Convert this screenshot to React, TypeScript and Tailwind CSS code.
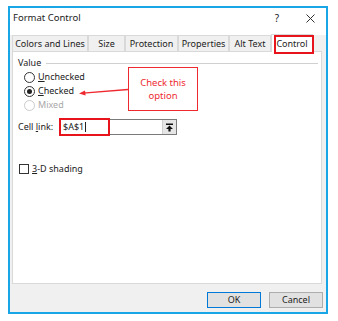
import React from "react";

const tabs = [
  { label: "Colors and Lines", w: "w-[76px]" },
  { label: "Size", w: "w-[37px]" },
  { label: "Protection", w: "w-[53px]" },
  { label: "Properties", w: "w-[51px]" },
  { label: "Alt Text", w: "w-[42px]" },
];

function Radio({ checked, disabled }: { checked?: boolean; disabled?: boolean }) {
  return (
    <span
      className={
        "flex h-[11px] w-[11px] items-center justify-center rounded-full border bg-white " +
        (disabled ? "border-[#cccccc]" : "border-[#333333]")
      }
    >
      {checked && <span className="h-[5px] w-[5px] rounded-full bg-[#222222]" />}
    </span>
  );
}

function UploadIcon() {
  return (
    <svg width="9" height="9" viewBox="0 0 9 9">
      <rect x="1" y="0.5" width="7" height="1.5" fill="#111" />
      <path d="M4.5 2.5 L8 6 L5.6 6 L5.6 8.5 L3.4 8.5 L3.4 6 L1 6 Z" fill="#111" />
    </svg>
  );
}

export default function App() {
  return (
    <div
      className="h-[321px] w-[338px] bg-white pl-[8px] pt-[6px] text-[9px] text-[#222222]"
      style={{ fontFamily: '"Noto Sans", "Open Sans", Arial, sans-serif' }}
    >
      <div className="flex h-[308px] w-[320px] flex-col border-2 border-[#19a6e6] bg-[#f0f0f0]">
        {/* title bar */}
        <div className="flex h-[27px] items-start bg-white pl-[3px] pr-[11px] pt-[4px]">
          <span className="text-[9.5px] leading-[12px]">Format Control</span>
          <span className="ml-auto mr-[27px] text-[10px] leading-[12px]">?</span>
          <svg width="9" height="9" viewBox="0 0 9 9" className="mt-[2px]">
            <path d="M0.5 0.5 L8.5 8.5 M8.5 0.5 L0.5 8.5" stroke="#333" strokeWidth="1" />
          </svg>
        </div>

        {/* tabs */}
        <div className="relative ml-[2px] flex h-[16px] items-end">
          {tabs.map((t) => (
            <div
              key={t.label}
              className={
                "flex h-[16px] items-center justify-center border-l border-t border-r border-[#d9d9d9] bg-[#f0f0f0] " +
                t.w
              }
            >
              {t.label}
            </div>
          ))}
          <div className="relative z-10 -mb-px flex h-[18px] w-[42px] items-center justify-center border-l border-t border-r border-[#d9d9d9] bg-white">
            Control
          </div>
          <div className="absolute left-[262px] top-[0px] z-20 h-[19px] w-[40px] border-2 border-[#e8141c]" />
        </div>

        {/* panel */}
        <div className="relative ml-[2px] mr-[4px] h-[233px] border border-[#d9d9d9] bg-white">
          <div className="flex items-center pl-[5px] pt-[5px]">
            <span className="leading-[12px]">Value</span>
            <span className="ml-[5px] mr-[3px] h-px flex-1 bg-[#d0d0d0]" />
          </div>
          <div className="flex flex-col gap-[2px] pl-[11px] pt-[2px]">
            <div className="flex h-[12px] items-center gap-[3px]">
              <Radio />
              <span>
                <u>U</u>nchecked
              </span>
            </div>
            <div className="flex h-[12px] items-center gap-[3px]">
              <Radio checked />
              <span>
                <u>C</u>hecked
              </span>
            </div>
            <div className="flex h-[12px] items-center gap-[3px] text-[#a8a8a8]">
              <Radio disabled />
              <span>Mixed</span>
            </div>
          </div>

          <div className="flex items-center pl-[5px] pt-[8px]">
            <span className="w-[41px]">
              Cell <u>l</u>ink:
            </span>
            <div className="relative flex h-[16px] w-[118px] items-center border border-[#7a7a7a] bg-white">
              <span className="pl-[3px]">$A$1</span>
              <span className="ml-[1px] h-[10px] w-px bg-[#222]" />
              <span className="ml-auto flex h-[14px] w-[14px] items-center justify-center border-l border-[#cfcfcf] bg-[#e6e6e6]">
                <UploadIcon />
              </span>
              <span className="absolute left-[-1px] top-[-2px] h-[18px] w-[51px] border-2 border-[#e8141c]" />
            </div>
          </div>

          <div className="flex items-center gap-[3px] pl-[6px] pt-[27px]">
            <span className="h-[10px] w-[10px] border border-[#333333] bg-white" />
            <span>
              <u>3</u>-D shading
            </span>
          </div>

          {/* annotation */}
          <div className="absolute left-[115px] top-[15px] flex h-[44px] w-[70px] flex-col items-center justify-center border border-[#ee2a30] bg-white text-[9.5px] leading-[13px] text-[#ee2a30]">
            <span>Check this</span>
            <span>option</span>
          </div>
          <svg className="absolute left-[64px] top-[33px]" width="52" height="12" viewBox="0 0 52 12">
            <path d="M51 4.5 L6 8.2" stroke="#ee2a30" strokeWidth="1.3" />
            <path d="M2 8.6 L8 5.6 L8.6 10.6 Z" fill="#ee2a30" />
          </svg>
        </div>

        {/* buttons */}
        <div className="flex justify-end gap-[8px] pr-[3px] pt-[8px]">
          <button className="flex h-[16px] w-[54px] items-center justify-center border border-[#0078d7] bg-[#e1e1e1] text-[9px]">
            OK
          </button>
          <button className="flex h-[16px] w-[54px] items-center justify-center border border-[#adadad] bg-[#e1e1e1] text-[9px]">
            Cancel
          </button>
        </div>
      </div>
    </div>
  );
}
